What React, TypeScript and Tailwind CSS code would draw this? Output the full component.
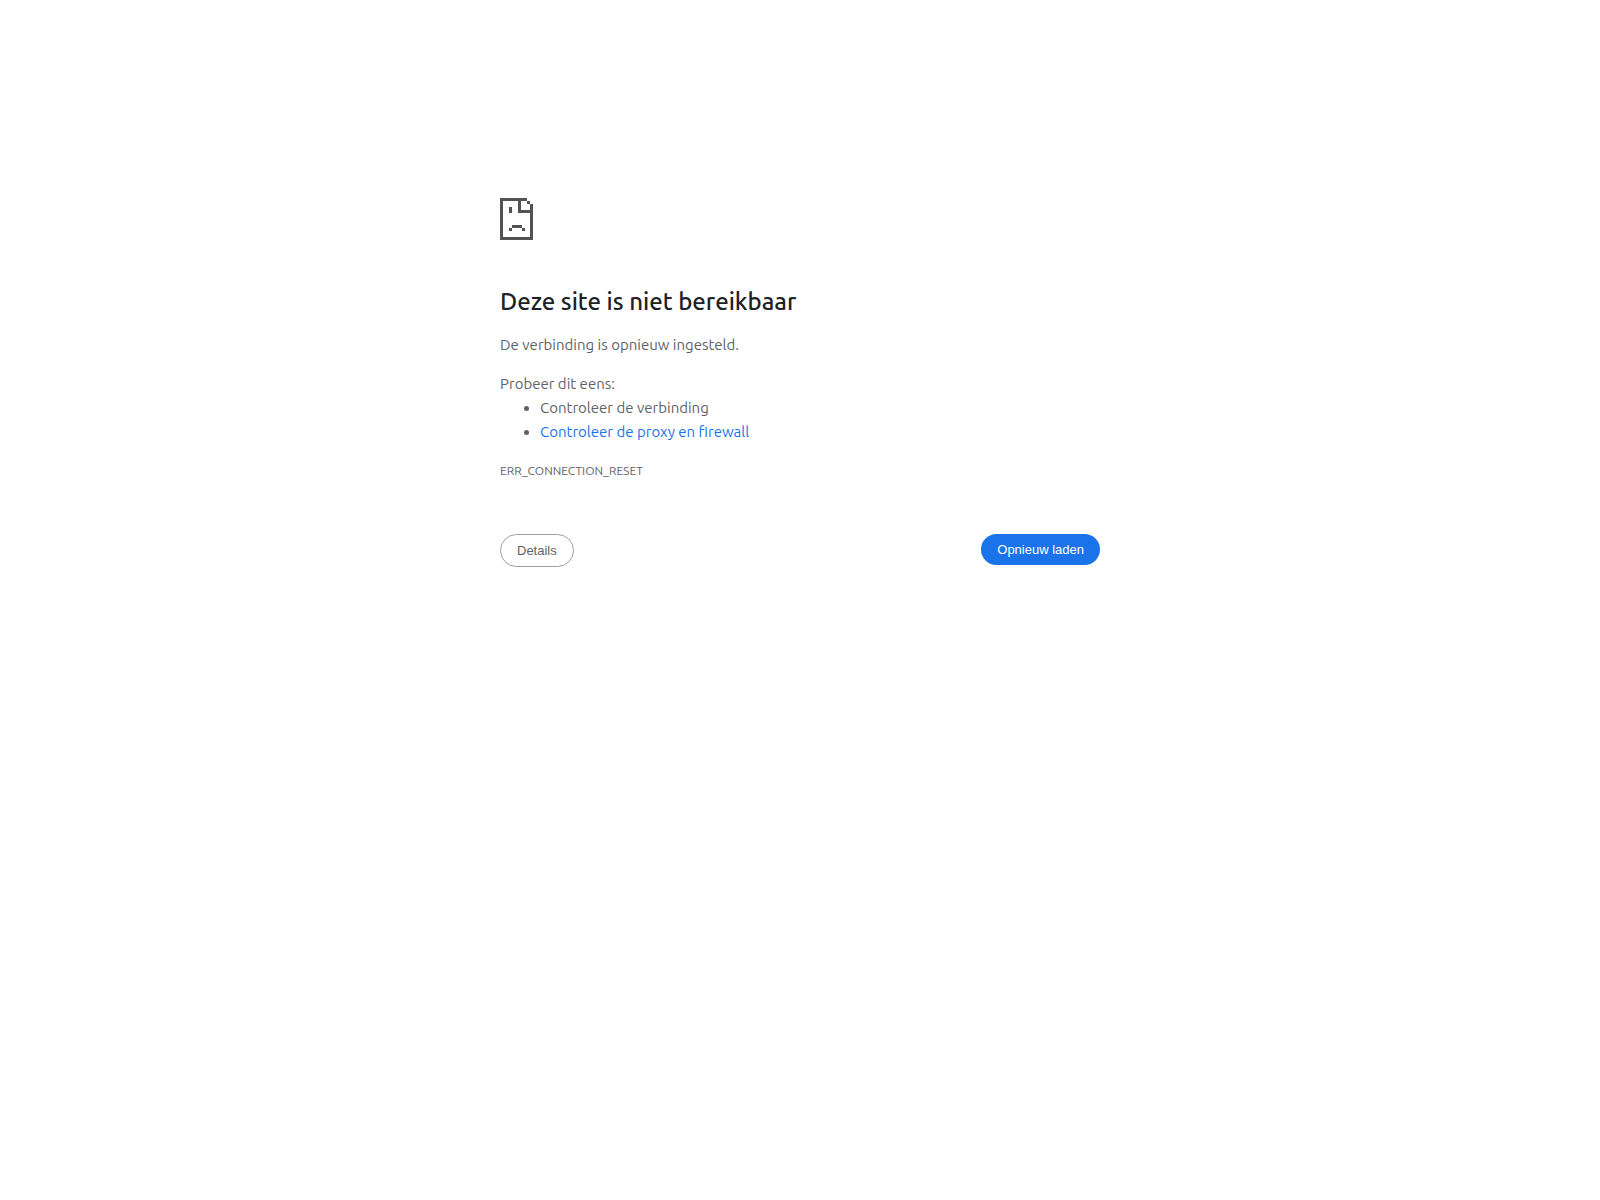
const suggestions = [
  { label: "Controleer de verbinding" },
  { label: "Controleer de proxy en firewall", href: "#buttons" },
];

function SadPageIcon() {
  return (
    <svg
      width="33"
      height="42"
      viewBox="0 0 33 42"
      fill="#535353"
      shapeRendering="crispEdges"
      aria-hidden="true"
    >
      {/* page outline with the folded corner */}
      <path
        d="M0 0h27v3h-6v9h9V6h3v36H0zM3 3v36h27V15H18V3z"
        fillRule="evenodd"
      />
      <path d="M27 3h3v3h-3z" />
      {/* eye and mouth */}
      <path d="M9 9h3v6H9zM12 27h10v3H12zM9 30h3v3H9zM22 30h3v3h-3z" />
    </svg>
  );
}

export default function App() {
  return (
    <main className="min-h-screen bg-white px-6 pt-[198px] font-['Ubuntu','Open_Sans',sans-serif] text-[15px] leading-6 text-[#5f6368]">
      <div className="mx-auto max-w-[600px]">
        <SadPageIcon />

        <h1 className="mt-11 text-2xl leading-9 font-medium text-[#202124]">
          Deze site is niet bereikbaar
        </h1>
        <p className="mt-[13px]">De verbinding is opnieuw ingesteld.</p>

        <div className="mt-[15px]">
          <p>Probeer dit eens:</p>
          <ul className="list-disc pl-10">
            {suggestions.map(({ label, href }) => (
              <li key={label}>
                {href ? (
                  <a href={href} className="text-[#1a73e8]">
                    {label}
                  </a>
                ) : (
                  label
                )}
              </li>
            ))}
          </ul>
        </div>

        <p className="mt-4 text-xs leading-[22px]">ERR_CONNECTION_RESET</p>

        <div
          id="buttons"
          className="mt-[52px] flex items-start justify-between font-['Liberation_Sans',sans-serif] text-[13px] leading-[15px]"
        >
          <button
            type="button"
            className="rounded-full border border-[#9aa0a6] px-4 py-2"
          >
            Details
          </button>
          <button
            type="button"
            className="rounded-full bg-[#1a73e8] px-4 py-2 text-white"
          >
            Opnieuw laden
          </button>
        </div>
      </div>
    </main>
  );
}
